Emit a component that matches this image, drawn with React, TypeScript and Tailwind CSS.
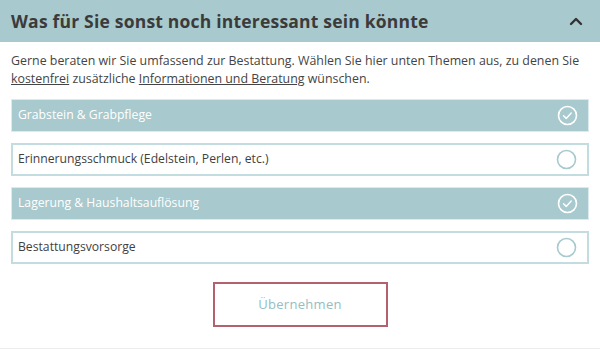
import { useState } from 'react';

const topics = [
  { label: 'Grabstein & Grabpflege', checked: true },
  { label: 'Erinnerungsschmuck (Edelstein, Perlen, etc.)', checked: false },
  { label: 'Lagerung & Haushaltsauflösung', checked: true },
  { label: 'Bestattungsvorsorge', checked: false },
];

function CheckCircle({ checked }: { checked: boolean }) {
  return (
    <svg width="21" height="21" viewBox="0 0 21 21" fill="none">
      <circle cx="10.5" cy="10.5" r="9" stroke={checked ? '#ffffff' : '#a8c9cd'} strokeWidth="1.6" />
      {checked && (
        <path d="M6.6 10.8l2.6 2.6 5-5.4" stroke="#ffffff" strokeWidth="1.5" strokeLinecap="round" strokeLinejoin="round" />
      )}
    </svg>
  );
}

export default function App() {
  const [items, setItems] = useState(topics);

  const toggle = (i: number) =>
    setItems(items.map((t, idx) => (idx === i ? { ...t, checked: !t.checked } : t)));

  return (
    <div className="w-[600px] h-[350px] bg-white font-['Open_Sans',sans-serif] flex flex-col">
      <div className="h-[42px] bg-[#a8c9cd] flex items-center justify-between pl-[11px] pr-[17px]">
        <h2 className="text-[17.5px] font-bold text-[#3b3b3b] tracking-[0.2px]">
          Was für Sie sonst noch interessant sein könnte
        </h2>
        <svg width="14" height="10" viewBox="0 0 14 10" fill="none">
          <path d="M2 8l5-5 5 5" stroke="#333" strokeWidth="2.4" strokeLinecap="round" strokeLinejoin="round" />
        </svg>
      </div>

      <div className="px-[11px] pt-[10px]">
        <p className="text-[12.4px] leading-[18px] text-[#444]">
          Gerne beraten wir Sie umfassend zur Bestattung. Wählen Sie hier unten Themen aus, zu denen Sie{' '}
          <br />
          <span className="underline">kostenfrei</span> zusätzliche{' '}
          <span className="underline">Informationen und Beratung</span> wünschen.
        </p>

        <div className="mt-[11px] flex flex-col gap-[11px]">
          {items.map((t, i) => (
            <button
              key={t.label}
              onClick={() => toggle(i)}
              className={
                t.checked
                  ? 'h-[33px] w-[578px] flex items-center justify-between pl-[6px] pr-[10px] bg-[#a8c9cd] border border-[#dcebed] text-white text-[12.2px] text-left'
                  : 'h-[33px] w-[578px] flex items-center justify-between pl-[5px] pr-[10px] bg-white border-2 border-[#c3dcdf] text-[#3f3f3f] text-[12.2px] text-left'
              }
            >
              <span>{t.label}</span>
              <CheckCircle checked={t.checked} />
            </button>
          ))}
        </div>

        <div className="mt-[18px] flex justify-center">
          <button className="w-[175px] h-[45px] border-2 border-[#b3616f] text-[13px] text-[#93bec3] tracking-[0.3px]">
            Übernehmen
          </button>
        </div>
      </div>

      <div className="mt-auto mb-[1px] h-px bg-[#ececec]" />
    </div>
  );
}
